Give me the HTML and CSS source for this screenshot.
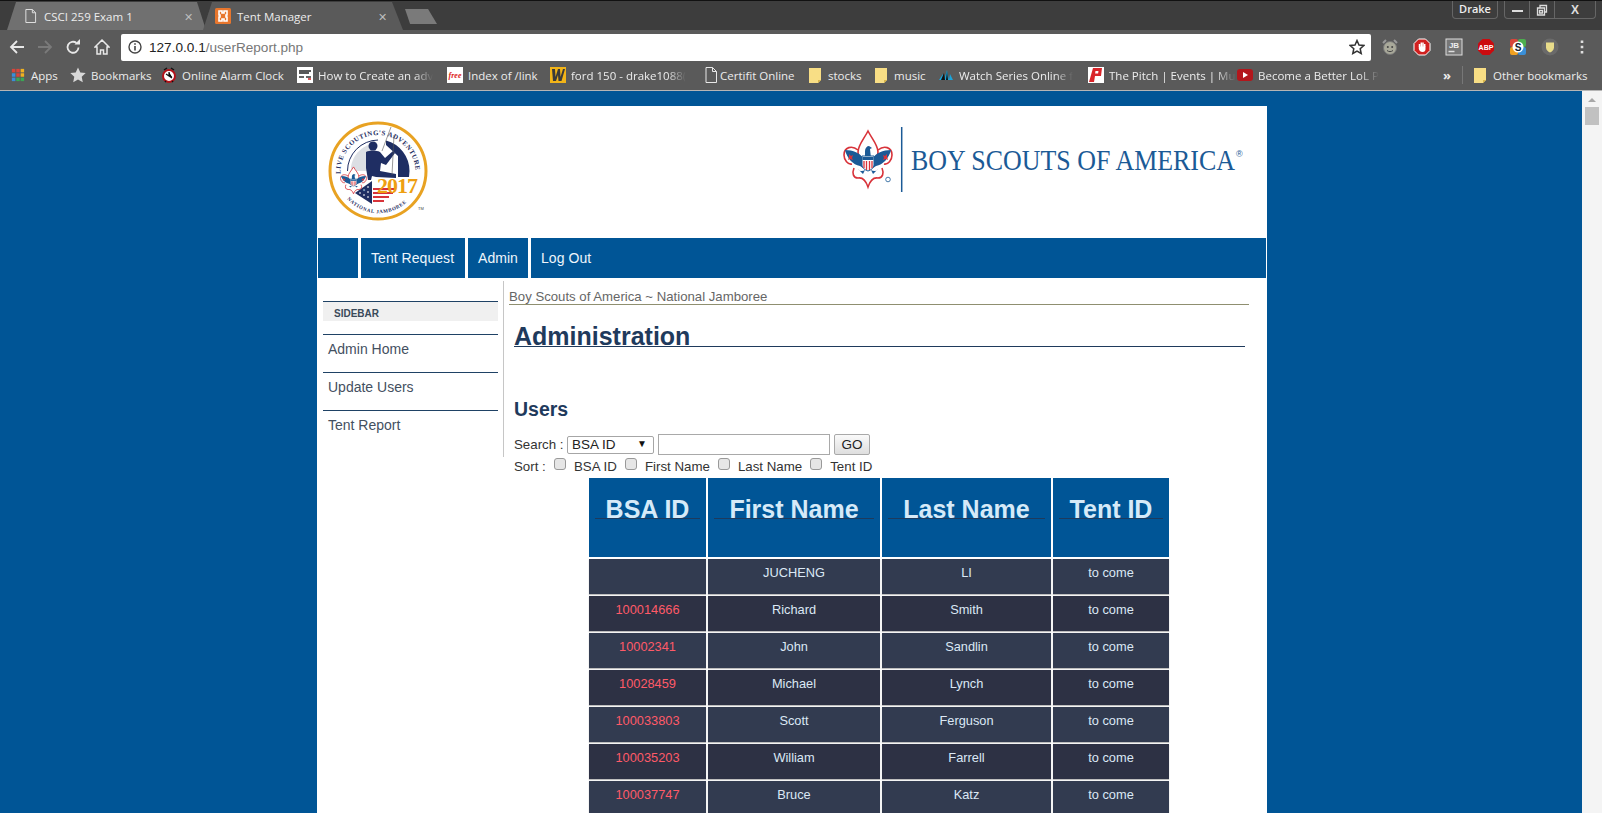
FILE: index.html
```html
<!DOCTYPE html>
<html lang="en">
<head>
<meta charset="utf-8">
<title>Tent Manager</title>
<link rel="stylesheet" href="styles.css">
</head>
<body>
<div class="browser">
  <header class="chrome">
    <div class="tabstrip">
      <div class="tab tab-back">
        <svg class="tab-icon" viewBox="0 0 14 16"><path d="M2 1h7l3.500 3.500V15H2z M9 1v3.500h3.500" fill="none" stroke="#e6e6e6" stroke-width="1"/></svg>
        <span class="tab-title">CSCI 259 Exam 1</span>
        <span class="tab-close">✕</span>
      </div>
      <div class="tab tab-active">
        <svg class="tab-icon" viewBox="0 0 16 16"><rect width="16" height="16" rx="1.500" fill="#e8762d"/><path d="M4 3h3v2h2V3h3v4h-1v2h1v4H9v-2H7v2H4V9h1V7H4z" fill="none" stroke="#fff" stroke-width="1.600"/></svg>
        <span class="tab-title">Tent Manager</span>
        <span class="tab-close">✕</span>
      </div>
      <div class="newtab"></div>
      <div class="profile">Drake</div>
      <div class="winctl">
        <span class="win-btn win-min"><i></i></span>
        <span class="win-btn win-max"><svg viewBox="0 0 12 12" width="12" height="12"><path d="M1.500 4h7v7h-7z M4 4V1.500h6.500V8H8.500 M3.500 6.500h3v2.500h-3z" fill="none" stroke="#ddd" stroke-width="1.300"/></svg></span>
        <span class="win-btn win-close">X</span>
      </div>
    </div>
    <div class="toolbar">
      <svg class="nav-btn" viewBox="0 0 16 16"><path d="M15 8H2M8 2L2 8l6 6" fill="none" stroke="#e8e8e8" stroke-width="1.800"/></svg>
      <svg class="nav-btn" viewBox="0 0 16 16"><path d="M1 8h13M8 2l6 6-6 6" fill="none" stroke="#7a7a7a" stroke-width="1.800"/></svg>
      <svg class="nav-btn" viewBox="0 0 16 16"><path d="M13.500 8.500A5.500 5.500 0 1 1 11.500 4" fill="none" stroke="#e8e8e8" stroke-width="1.800"/><path d="M9.500 5.500H15V0z" fill="#e8e8e8"/></svg>
      <svg class="nav-btn" viewBox="0 0 16 16"><path d="M8 1L1 8h2v7h3.500v-4h3v4H13V8h2z" fill="none" stroke="#e8e8e8" stroke-width="1.500"/></svg>
      <div class="omnibox">
        <svg class="info" viewBox="0 0 14 14"><circle cx="7" cy="7" r="6" fill="none" stroke="#444" stroke-width="1.400"/><path d="M7 6v4.500M7 3.200v1.600" stroke="#444" stroke-width="1.600"/></svg>
        <span class="url"><span class="url-host">127.0.0.1</span>/userReport.php</span>
        <svg class="star" viewBox="0 0 16 16"><path d="M8 1.500l2 4.500 4.800.5-3.600 3.200 1 4.800L8 12l-4.200 2.500 1-4.800L1.200 6.500 6 6z" fill="none" stroke="#333" stroke-width="1.500"/></svg>
      </div>
      <div class="extensions">
        <svg class="ext" viewBox="0 0 18 18"><circle cx="9" cy="10" r="6.500" fill="#a9a99a" stroke="#777"/><circle cx="6.800" cy="9" r="1" fill="#444"/><circle cx="11.200" cy="9" r="1" fill="#444"/><path d="M6 12.500c2 1.500 4 1.500 6 0" fill="none" stroke="#444"/><path d="M2 5l3-3M16 5l-3-3" stroke="#999" stroke-width="2"/></svg>
        <svg class="ext" viewBox="0 0 18 18"><path d="M5.500 1h7L17 5.500v7L12.500 17h-7L1 12.500v-7z" fill="#d0201f" stroke="#fff"/><path d="M6.500 9V6M8.300 9V4.500M10 9V4.500M11.700 9V6" stroke="#fff" stroke-width="1.500"/><path d="M5.800 8.500h6.700v2.500c0 2-1 3-3 3s-3-1-3.700-3z" fill="#fff"/></svg>
        <svg class="ext" viewBox="0 0 18 18"><rect x="1" y="1" width="16" height="16" fill="#777" stroke="#ddd"/><text x="9" y="9.500" class="ext-jb">JB</text><path d="M3.500 13.500h6" stroke="#ddd" stroke-width="1.500"/></svg>
        <svg class="ext" viewBox="0 0 18 18"><path d="M5.500 1h7L17 5.500v7L12.500 17h-7L1 12.500v-7z" fill="#cc0a0e"/><text x="9" y="11.800" class="ext-abp">ABP</text></svg>
        <svg class="ext" viewBox="0 0 18 18"><rect x="1" y="1" width="8" height="8" rx="2" fill="#d9453a"/><rect x="9" y="1" width="8" height="8" rx="2" fill="#4cae4f"/><rect x="1" y="9" width="8" height="8" rx="2" fill="#f0a020"/><rect x="9" y="9" width="8" height="8" rx="2" fill="#3a8fd8"/><circle cx="9" cy="9" r="5.500" fill="#fff"/><text x="9" y="12.500" class="ext-s">S</text></svg>
        <svg class="ext" viewBox="0 0 18 18"><circle cx="9" cy="9" r="8.500" fill="#6a6a6a"/><path d="M5 4.500h8v5c0 2.500-2 4-4 5-2-1-4-2.500-4-5z" fill="#e8dc8a"/></svg>
        <svg class="ext" viewBox="0 0 18 18"><path d="M9 2.500v2.500M9 7.700v2.600M9 13v2.500" stroke="#e0e0e0" stroke-width="2.600"/></svg>
      </div>
    </div>
    <div class="bookmarks">
      <div class="bm bm-apps"><svg class="bm-icon" viewBox="0 0 16 16"><path d="M1 1h4v4H1z" fill="#d9453a"/><path d="M6 1h4v4H6z" fill="#d9453a"/><path d="M11 1h4v4h-4z" fill="#f0b020"/><path d="M1 6h4v4H1z" fill="#3a8fd8"/><path d="M6 6h4v4H6z" fill="#d9453a"/><path d="M11 6h4v4h-4z" fill="#f0b020"/><path d="M1 11h4v4H1z" fill="#3a8fd8"/><path d="M6 11h4v4H6z" fill="#3aa655"/><path d="M11 11h4v4h-4z" fill="#3aa655"/></svg><span class="bm-label">Apps</span></div>
      <div class="bm bm-star"><svg class="bm-icon" viewBox="0 0 16 16"><path d="M8 .5l2.300 5 5.400.6-4 3.700 1.100 5.400L8 12.500l-4.800 2.700 1.100-5.400-4-3.700 5.400-.6z" fill="#d8d8d8"/></svg><span class="bm-label">Bookmarks</span></div>
      <div class="bm bm-clock"><svg class="bm-icon" viewBox="0 0 16 16"><circle cx="8" cy="9" r="6" fill="#fff" stroke="#b3121a" stroke-width="2"/><path d="M8 5v4l3 1M5 7l6 4" stroke="#111" stroke-width="1.200"/><path d="M3 3l3-2M13 3l-3-2M4 15l1-1M12 15l-1-1" stroke="#111" stroke-width="1.500"/></svg><span class="bm-label">Online Alarm Clock</span></div>
      <div class="bm bm-wonder"><svg class="bm-icon" viewBox="0 0 16 16"><rect width="16" height="16" fill="#fff"/><path d="M2 4h12M2 6h10" stroke="#222" stroke-width="1.300"/><path d="M2 10h5M9 10h5" stroke="#333" stroke-width="1.500"/><path d="M11 12h3" stroke="#c22" stroke-width="1.500"/></svg><span class="bm-label bm-fade">How to Create an adv</span></div>
      <div class="bm bm-free"><svg class="bm-icon" viewBox="0 0 16 16"><rect width="16" height="16" fill="#fff"/><text x="8" y="11" class="ico-free">free</text></svg><span class="bm-label">Index of /link</span></div>
      <div class="bm bm-w"><svg class="bm-icon" viewBox="0 0 16 16"><rect width="16" height="16" fill="#f2b418"/><path d="M2 2h3l.500 8L8 2h2l.500 8L13 2h2l-3.500 12h-3L8 8l-2 6H3z" fill="#3a3a3a"/></svg><span class="bm-label bm-fade">ford 150 - drake1088(</span></div>
      <div class="bm bm-doc"><svg class="bm-icon" viewBox="0 0 14 16"><path d="M2 .5h6.500L12.500 4.500V15.500H2z M8.500 .5v4h4" fill="none" stroke="#e8e8e8"/></svg><span class="bm-label">Certifit Online</span></div>
      <div class="bm bm-stocks"><svg class="bm-icon" viewBox="0 0 12 16"><path d="M0 1h12v12l-3 3H0z" fill="#f8de85"/><path d="M12 13H9v3z" fill="#d9b64a"/></svg><span class="bm-label">stocks</span></div>
      <div class="bm bm-music"><svg class="bm-icon" viewBox="0 0 12 16"><path d="M0 1h12v12l-3 3H0z" fill="#f8de85"/><path d="M12 13H9v3z" fill="#d9b64a"/></svg><span class="bm-label">music</span></div>
      <div class="bm bm-watch"><svg class="bm-icon" viewBox="0 0 16 16"><path d="M1 13L5 7l1 6zM6 13l3-10 2 10zM11 13l1-6 3 6z" fill="#1aa3d9"/><path d="M3 13l3-7 1 7zM8 13l1-9 1 9z" fill="#111"/></svg><span class="bm-label bm-fade">Watch Series Online f</span></div>
      <div class="bm bm-pitch"><svg class="bm-icon" viewBox="0 0 16 16"><rect width="16" height="16" fill="#fff"/><path d="M5 1h9l-1 8H7l-1 6H1z" fill="#d9252a"/><path d="M7.500 4h3l-.4 2.500h-3z" fill="#fff"/></svg><span class="bm-label bm-fade">The Pitch | Events | Mu</span></div>
      <div class="bm bm-yt"><svg class="bm-icon" viewBox="0 0 16 16"><rect y="2" width="16" height="12" rx="3" fill="#b3161b"/><path d="M6 5l5 3-5 3z" fill="#fff"/></svg><span class="bm-label bm-fade">Become a Better LoL P</span></div>
      <div class="bm-more">»</div>
      <div class="bm bm-other"><svg class="bm-icon" viewBox="0 0 12 16"><path d="M0 1h12v12l-3 3H0z" fill="#f8de85"/><path d="M12 13H9v3z" fill="#d9b64a"/></svg><span class="bm-label">Other bookmarks</span></div>
    </div>
  </header>

  <div class="viewport">
    <main class="stage">
      <div class="page">
        <div class="masthead">
          <svg class="logo-jam" viewBox="0 0 110 100" role="img" aria-label="National Jamboree 2017 logo">
            <defs>
              <path id="arcTop" d="M12.500 53A37.500 37.500 0 0 1 87.500 50"/>
              <path id="arcBot" d="M19 78A42 42 0 0 0 79 81"/>
            </defs>
            <circle cx="50" cy="50" r="48" fill="#fff" stroke="#e8a222" stroke-width="3"/>
            <text class="jam-arc"><textPath href="#arcTop" textLength="117" lengthAdjust="spacing">LIVE SCOUTING'S ADVENTURE</textPath></text>
            <text class="jam-arc jam-arc-small"><textPath href="#arcBot" textLength="66" lengthAdjust="spacing">NATIONAL JAMBOREE</textPath></text>
            <path d="M19.500 50A31 31 0 0 1 50 19" fill="none" stroke="#1f2e63" stroke-width="1"/>
            <path d="M23 46A27 27 0 0 1 44 23L44 50 23 50z" fill="#dcdfe4"/>
            <path d="M58 19.500A31.500 31.500 0 0 1 81.500 50L81 56 70 56 70 35 58 24z" fill="#1f2e63"/>
            <circle cx="45" cy="25" r="4.500" fill="#1f2e63"/>
            <path d="M38 31c4-2 10-2 14 0l5 6 8-7 2 2-9 12-5-2-1 8 16 3 0 4-20-1-4-1-1 4h-3l-2-12z" fill="#1f2e63"/>
            <path d="M63 6L54 30M66 14L64 54" stroke="#555" stroke-width=".6" fill="none"/>
            <path d="M27 72L44 60 44 83z" fill="#1f2e63"/>
            <path d="M31 72h2M35 69h2M35 74h2M39 66h2M39 71h2M39 76h2" stroke="#fff" stroke-width="1.200"/>
            <path d="M45 68h22M45 72h20M45 76h16M45 80h11" stroke="#d8333a" stroke-width="2"/>
            <use href="#fleur" transform="translate(12 44) scale(.54 .48)"/>
            <text x="49" y="72" class="jam-year">2017</text>
            <text x="90" y="89" class="jam-tm">TM</text>
          </svg>
          <svg class="logo-bsa" viewBox="0 0 400 65" role="img" aria-label="Boy Scouts of America">
            <g id="fleur" transform="translate(0 3)">
              <path d="M25 1C29 9 35 15 35 22 35 25 33 27 31 28H19C17 27 15 25 15 22 15 15 21 9 25 1Z" fill="#fff" stroke="#d8333a" stroke-width="1.600"/>
              <path d="M15 20C9 15 1 17 1 25c0 5 4 10 8 9M35 20C41 15 49 17 49 25c0 5-4 10-8 9" fill="none" stroke="#d8333a" stroke-width="1.600"/>
              <path d="M11 38c-2 5-1 10 4 10 5-1 8 3 10 9 2-6 5-10 10-9 5 0 6-5 4-10" fill="none" stroke="#d8333a" stroke-width="1.600"/>
              <path d="M2 20c8 0 15 3 19 9h8c4-6 11-9 19-9-2 8-8 15-15 16l-3 2H20l-3-2C10 35 4 28 2 20z" fill="#1b5a96"/>
              <path d="M22 21c0-3 2-5 4-5l3 2-2 1 1 9h-6z" fill="#1b5a96"/>
              <path d="M19 26h12v9c0 3-3 5-6 6-3-1-6-3-6-6z" fill="#fff" stroke="#1b5a96"/>
              <path d="M19.500 27h11v3h-11z" fill="#1b5a96"/>
              <path d="M21 31v7M23.500 31v9M26.500 31v9M29 31v7" stroke="#d8333a" stroke-width="1.300"/>
              <path d="M15 39c2 3 5 2 7 1l-2 4zM35 39c-2 3-5 2-7 1l2 4z" fill="#1b5a96"/>
              <path d="M6 24l2 2 2-1-1 3 1 2-3-1-2 1 1-3z" fill="#d8333a"/>
              <path d="M44 24l-2 2-2-1 1 3-1 2 3-1 2 1-1-3z" fill="#d8333a"/>
              <circle cx="45" cy="49.500" r="2.300" fill="none" stroke="#1b5a96" stroke-width=".8"/>
            </g>
            <path d="M58.700 0v65" stroke="#1b5a96" stroke-width="1.500"/>
            <text x="68" y="43" class="bsa-name" textLength="324" lengthAdjust="spacingAndGlyphs">BOY SCOUTS OF AMERICA</text>
            <text x="393" y="30" class="bsa-reg">®</text>
          </svg>
        </div>

        <nav class="mainnav">
          <a class="nav-item nav-blank"></a>
          <a class="nav-item nav-tent">Tent Request</a>
          <a class="nav-item nav-admin">Admin</a>
          <a class="nav-item nav-last">Log Out</a>
        </nav>

        <div class="columns">
          <aside class="sidebar">
            <div class="side-head">SIDEBAR</div>
            <ul class="side-list">
              <li class="side-link">Admin Home</li>
              <li class="side-link">Update Users</li>
              <li class="side-link">Tent Report</li>
            </ul>
          </aside>
          <section class="content">
            <div class="crumb">Boy Scouts of America ~ National Jamboree</div>
            <div class="article">
              <h1 class="title">Administration</h1>
              <h2 class="subtitle">Users</h2>
              <form class="search-row">
                <span class="search-label">Search :</span>
                <span class="select-wrap"><select class="search-select"><option>BSA ID</option></select></span>
                <input class="search-input" type="text">
                <button class="go" type="button">GO</button>
              </form>
              <div class="sort-row">
                <span class="sort-label">Sort :</span>
                <input class="check" type="checkbox"><span>BSA ID</span>
                <input class="check" type="checkbox"><span>First Name</span>
                <input class="check" type="checkbox"><span>Last Name</span>
                <input class="check" type="checkbox"><span>Tent ID</span>
              </div>
              <table class="users">
                <thead>
                  <tr>
                    <th class="col-id"><div class="th-inner">BSA ID</div></th>
                    <th class="col-first"><div class="th-inner">First Name</div></th>
                    <th class="col-last"><div class="th-inner">Last Name</div></th>
                    <th class="col-tent"><div class="th-inner">Tent ID</div></th>
                  </tr>
                </thead>
                <tbody>
                  <tr><td class="uid"></td><td>JUCHENG</td><td>LI</td><td>to come</td></tr>
                  <tr><td class="uid">100014666</td><td>Richard</td><td>Smith</td><td>to come</td></tr>
                  <tr><td class="uid">10002341</td><td>John</td><td>Sandlin</td><td>to come</td></tr>
                  <tr><td class="uid">10028459</td><td>Michael</td><td>Lynch</td><td>to come</td></tr>
                  <tr><td class="uid">100033803</td><td>Scott</td><td>Ferguson</td><td>to come</td></tr>
                  <tr><td class="uid">100035203</td><td>William</td><td>Farrell</td><td>to come</td></tr>
                  <tr><td class="uid">100037747</td><td>Bruce</td><td>Katz</td><td>to come</td></tr>
                </tbody>
              </table>
            </div>
          </section>
        </div>
      </div>
    </main>
    <div class="scrollbar">
      <span class="scroll-up"></span>
      <span class="scroll-thumb"></span>
    </div>
  </div>
</div>
</body>
</html>
```
FILE: styles.css
```css
* { box-sizing: border-box; }
html, body { margin: 0; padding: 0; height: 100%; overflow: hidden; }
body { font-family: "Liberation Sans", Arial, sans-serif; font-size: 14px; color: #333; background: #005596; }
.browser { width: 1602px; height: 813px; display: flex; flex-direction: column; overflow: hidden; }

/* browser chrome */
.chrome { flex: none; height: 91px; background: #5a5a5a; font-family: "Open Sans", "Noto Sans", sans-serif; color: #ececec; border-bottom: 1px solid #b5b5b5; }
.tabstrip { height: 30px; background: #3d3d3d; border-top: 1px solid #111; display: flex; align-items: flex-end; padding-left: 7px; position: relative; }
.tab { height: 28px; display: flex; align-items: center; font-size: 11.500px; flex: none; }
.tab-back { width: 199px; background: #707070; clip-path: polygon(9px 0, 190px 0, 100% 100%, 0 100%); padding: 0 7px 0 17px; }
.tab-active { width: 200px; margin-left: -3px; background: #5a5a5a; clip-path: polygon(9px 0, 189px 0, 100% 100%, 0 100%); padding: 0 10px 0 12px; }
.tab-icon { width: 16px; height: 16px; flex: none; margin-right: 6px; }
.tab-back .tab-icon { width: 13px; margin-right: 7px; }
.tab-title { flex: 1; white-space: nowrap; }
.tab-close { font-size: 11px; color: #bdbdbd; margin-right: 6px; }
.newtab { width: 32px; height: 15px; margin: 0 0 6px 2px; background: #7a7a7a; clip-path: polygon(0 0, 72% 0, 100% 100%, 16% 100%); align-self: flex-end; flex: none; }
.profile { margin-left: auto; width: 46px; height: 18px; border: 1px solid #666; border-top: 0; border-radius: 0 0 4px 4px; font-size: 11px; line-height: 16px; text-align: center; align-self: flex-start; font-weight: 600; color: #eee; }
.winctl { margin-left: 6px; margin-right: 6px; width: 92px; height: 18px; display: flex; align-self: flex-start; border: 1px solid #666; border-top: 0; border-radius: 0 0 4px 4px; }
.win-btn { display: flex; align-items: center; justify-content: center; height: 17px; border-right: 1px solid #666; flex: none; }
.win-min { width: 25px; }
.win-min i { width: 11px; height: 2px; background: #ddd; margin-top: 3px; }
.win-max { width: 25px; }
.win-close { flex: 1; border-right: 0; font-size: 12px; font-weight: 700; color: #ddd; font-family: "Liberation Sans", sans-serif; }

.toolbar { height: 30px; padding: 4px 0 0 9px; display: flex; align-items: center; }
.nav-btn { width: 16px; height: 16px; flex: none; margin-right: 12px; }
.nav-btn:nth-child(4) { margin-right: 8px; margin-left: 1px; }
.omnibox { width: 1250px; height: 27px; background: #fff; border-radius: 2px; display: flex; align-items: center; padding: 0 6px 0 7px; margin-left: 3px; flex: none; }
.info { width: 14px; height: 14px; flex: none; margin-right: 7px; }
.url { flex: 1; font-family: "Liberation Sans", sans-serif; font-size: 13.600px; color: #777; }
.url-host { color: #222; }
.star { width: 16px; height: 16px; flex: none; }
.extensions { display: flex; padding-left: 3px; flex: none; }
.ext { width: 18px; height: 18px; margin: 0 7px; flex: none; }
.ext-jb { font: 700 8px "Liberation Sans", sans-serif; fill: #eee; text-anchor: middle; }
.ext-abp { font: 700 7px "Liberation Sans", sans-serif; fill: #fff; text-anchor: middle; }
.ext-s { font: 700 10px "Liberation Sans", sans-serif; fill: #123; text-anchor: middle; }

.bookmarks { height: 30px; display: flex; align-items: center; padding-left: 11px; font-size: 11.500px; }
.bm { display: flex; align-items: center; flex: none; white-space: nowrap; }
.bm-icon { width: 16px; height: 16px; flex: none; margin-right: 5px; }
.bm-fade { -webkit-mask-image: linear-gradient(to right, #000 84%, transparent 100%); mask-image: linear-gradient(to right, #000 84%, transparent 100%); }
.ico-free { font: italic 700 8px "Liberation Serif", serif; fill: #d22; text-anchor: middle; }
.bm-apps { width: 59px; }
.bm-apps .bm-icon { width: 14px; height: 14px; margin-right: 6px; }
.bm-star { width: 91px; }
.bm-clock { width: 136px; }
.bm-wonder { width: 150px; }
.bm-free { width: 103px; }
.bm-w { width: 153px; }
.bm-doc { width: 106px; }
.bm-stocks { width: 66px; }
.bm-music { width: 63px; }
.bm-watch { width: 150px; }
.bm-pitch { width: 149px; }
.bm-yt { width: 206px; }
.bm-stocks .bm-icon, .bm-music .bm-icon, .bm-other .bm-icon { width: 12px; margin-right: 7px; }
.bm-doc .bm-icon { margin-right: 1px; }
.bm-more { width: 19px; font-weight: 700; font-size: 13px; flex: none; }
.bm-other { border-left: 1px solid #777; padding-left: 11px; height: 18px; }

/* viewport */
.viewport { flex: 1; min-height: 0; display: flex; }
.stage { flex: 1; min-width: 0; background: #005596; padding: 15px 0 0 317px; overflow: hidden; }
.scrollbar { flex: none; width: 20px; background: #f4f4f4; display: flex; flex-direction: column; align-items: center; }
.scroll-up { width: 0; height: 0; border: 4px solid transparent; border-top: 0; border-bottom: 4px solid #a8a8a8; margin-top: 7px; }
.scroll-thumb { width: 14px; height: 18px; background: #c1c1c1; margin-top: 5px; }

/* page */
.page { width: 950px; min-height: 720px; background: #fff; }
.masthead { height: 132px; display: flex; justify-content: space-between; align-items: flex-start; padding: 15px 24px 0 11px; }
.logo-jam { width: 110px; height: 100px; flex: none; }
.jam-arc { font: 700 6.800px "Liberation Serif", serif; fill: #1f2e63; }
.jam-arc-small { font-size: 5px; }
.jam-year { font: 700 22px "Liberation Serif", serif; fill: #ee9f12; letter-spacing: -1px; }
.jam-tm { font: 400 4px "Liberation Sans", sans-serif; fill: #444; }
.logo-bsa { width: 400px; height: 65px; flex: none; margin-top: 6px; }
.bsa-name { font-family: "Liberation Serif", serif; font-size: 30px; fill: #1b5a96; }
.bsa-reg { font-family: "Liberation Sans", sans-serif; font-size: 9px; fill: #1b5a96; }

.mainnav { height: 40px; display: flex; gap: 3px; padding: 0 1px; }
.nav-item { display: flex; align-items: center; background: #005596; color: #eef6fc; font-size: 14px; letter-spacing: .05px; padding: 0 10px; flex: none; }
.nav-blank { width: 40px; }
.nav-tent { width: 104px; }
.nav-admin { width: 60px; }
.nav-last { flex: 1; }

.columns { display: flex; align-items: flex-start; }
.sidebar { width: 187px; height: 176px; margin-top: 3px; padding: 20px 5px 0 6px; border-right: 1px solid #c6c6c6; flex: none; }
.side-head { height: 20px; background: #f0f0f0; border-top: 1px solid #1f4265; font-size: 10px; font-weight: 700; line-height: 24px; padding-left: 11px; color: #3a4a5a; }
.side-list { list-style: none; margin: 13px 0 0; padding: 0; }
.side-link { height: 38px; border-top: 1px solid #1f4265; padding: 6px 0 0 5px; line-height: 17px; font-size: 14px; color: #44505f; }

.content { flex: none; width: 745px; padding: 8px 0 0 5px; }
.crumb { width: 740px; height: 19px; line-height: 22px; border-bottom: 1px solid #8f8f70; font-size: 13.200px; color: #666; white-space: nowrap; }
.article { margin-left: 5px; width: 731px; }
.title { margin: 21px 0 0; height: 21px; line-height: 20px; border-bottom: 1px solid #1f3a5c; font-size: 25px; font-weight: 700; color: #1f3a5c; }
.subtitle { margin: 52px 0 0; height: 20px; line-height: 20px; font-size: 19.500px; font-weight: 700; color: #1f3a5c; }
.search-row { margin: 15px 0 0; height: 21px; display: flex; align-items: center; font-size: 13.300px; }
.search-label { width: 53px; flex: none; }
.select-wrap { position: relative; display: block; flex: none; width: 87px; height: 18px; margin-right: 4px; }
.select-wrap::after { content: "▼"; position: absolute; right: 7px; top: 2px; font-size: 10px; line-height: 12px; color: #111; pointer-events: none; }
.search-select { appearance: none; -webkit-appearance: none; display: block; width: 100%; height: 100%; padding: 0 0 0 4px; border: 1px solid #a6a6a6; border-radius: 2px; background: #fff; font: 13.500px "Liberation Sans", sans-serif; color: #222; }
.search-input { flex: none; width: 172px; height: 21px; border: 1px solid #a9a9a9; background: #fff; margin-right: 4px; padding: 0; }
.go { flex: none; width: 36px; height: 21px; border: 1px solid #a9a9a9; border-radius: 2px; background: linear-gradient(#fafafa, #dedede); font: 13.500px "Liberation Sans", sans-serif; color: #222; padding: 0; }
.sort-row { margin-top: 3px; height: 17px; padding-bottom: 1px; display: flex; align-items: center; gap: 8px; font-size: 13.300px; white-space: nowrap; }
.sort-label { width: 32px; flex: none; }
.check { appearance: none; -webkit-appearance: none; width: 12px; height: 12px; margin: -4px 0 0; background: #e6e6e6; border: 1px solid #999; border-radius: 3px; flex: none; }

.users { margin: 1px 0 0 73px; border-collapse: separate; border-spacing: 2px; table-layout: fixed; width: 582px; }
.col-id { width: 117px; }
.col-first { width: 172px; }
.col-last { width: 169px; }
.col-tent { width: 116px; }
.users th { height: 79px; background: #005596; padding: 0 6px; vertical-align: top; }
.th-inner { height: 41px; padding-top: 19px; line-height: 24px; border-bottom: 1px solid #1e3a5c; font-size: 25px; font-weight: 700; color: #d6eaf8; white-space: nowrap; }
.users td { height: 35px; padding: 6px 0 0; vertical-align: top; line-height: 16px; text-align: center; font-size: 12.800px; background: #323b50; color: #dbe8f5; box-shadow: 0 1px 1px #bdbdbd; }
.users tbody tr:nth-child(even) td { background: #2d3144; }
.users td.uid { color: #ff5a68; }
```
